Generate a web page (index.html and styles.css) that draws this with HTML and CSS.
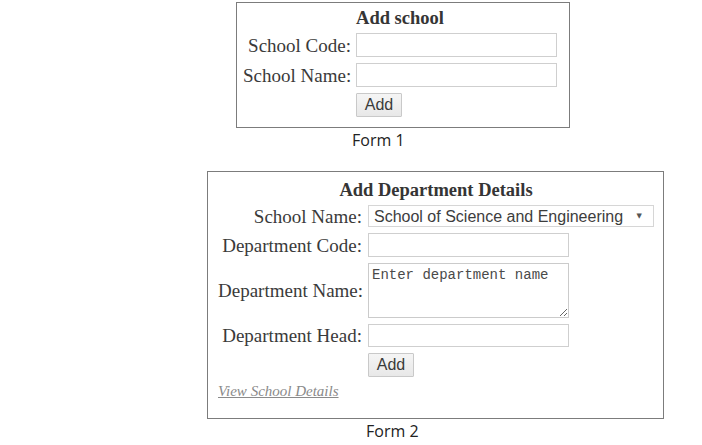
FILE: index.html
```html
<!DOCTYPE html>
<html lang="en">
<head>
<meta charset="utf-8">
<title>Forms</title>
<link rel="stylesheet" href="styles.css">
</head>
<body>
<div class="page">
  <form class="card card-school">
    <div class="title">Add school</div>
    <label class="lbl" for="sc">School Code:</label>
    <input class="field" id="sc" type="text">
    <label class="lbl" for="sn">School Name:</label>
    <input class="field" id="sn" type="text">
    <span class="spacer"></span>
    <button class="btn" type="button">Add</button>
  </form>
  <p class="caption caption-1">Form 1</p>

  <form class="card card-dept">
    <div class="title">Add Department Details</div>
    <label class="lbl" for="ds">School Name:</label>
    <div class="select-wrap">
      <select class="select" id="ds">
        <option>School of Science and Engineering</option>
      </select>
      <span class="arrow">&#9660;</span>
    </div>
    <label class="lbl" for="dc">Department Code:</label>
    <input class="field" id="dc" type="text">
    <label class="lbl" for="dn">Department Name:</label>
    <textarea class="area" id="dn" placeholder="Enter department name"></textarea>
    <label class="lbl" for="dh">Department Head:</label>
    <input class="field field-head" id="dh" type="text">
    <span class="spacer"></span>
    <button class="btn" type="button">Add</button>
    <a class="link" href="#">View School Details</a>
  </form>
  <p class="caption caption-2">Form 2</p>
</div>
</body>
</html>
```
FILE: styles.css
```css
html, body {
  margin: 0;
  background: #fff;
}
body {
  color: #353535;
  font-family: "Liberation Serif", "Times New Roman", serif;
}
.page {
  display: flex;
  flex-direction: column;
  align-items: flex-start;
}
.card {
  box-sizing: border-box;
  display: grid;
  align-items: center;
  align-content: start;
  row-gap: 6px;
  border: 1px solid #7c7c7c;
  font-size: 18.5px;
  margin: 0;
}
.card-school {
  width: 334px;
  height: 126px;
  margin: 2px 0 0 236px;
  padding: 5px 0 0 6px;
  grid-template-columns: 108px 201px;
  column-gap: 5px;
}
.card-dept {
  width: 457px;
  height: 248px;
  margin: 20px 0 0 207px;
  padding: 8px 0 0 10px;
  grid-template-columns: 144px 286px;
  column-gap: 6px;
}
.title {
  grid-column: 1 / -1;
  text-align: center;
  font-weight: bold;
  line-height: 21px;
  margin-bottom: -2px;
}
.lbl {
  text-align: right;
  white-space: nowrap;
  font-size: 19px;
  line-height: 21px;
  color: #3a3a3a;
}
.field {
  box-sizing: border-box;
  width: 201px;
  height: 24px;
  margin: 0;
  border: 1px solid #cfcfcf;
  background: #fff;
  font: 16px "Liberation Sans", Arial, sans-serif;
  padding: 0 4px;
}
.field-head {
  height: 23px;
}
.select-wrap {
  position: relative;
  width: 286px;
  height: 22px;
}
.select {
  box-sizing: border-box;
  width: 286px;
  height: 22px;
  margin: 0;
  padding: 0 0 0 5px;
  border: 1px solid #d6d6d6;
  border-radius: 0;
  background: #fff;
  color: #3d3d3d;
  font: 16px "Liberation Sans", Arial, sans-serif;
  -webkit-appearance: none;
  appearance: none;
}
.arrow {
  position: absolute;
  right: 12px;
  top: 7px;
  font: 7px "DejaVu Sans", sans-serif;
  color: #555;
  pointer-events: none;
}
.area {
  box-sizing: border-box;
  width: 201px;
  height: 55px;
  margin: 0;
  padding: 3px;
  border: 1px solid #cbcbcb;
  background: #fff;
  font: 14px/16px "Liberation Mono", "Courier New", monospace;
}
.area::placeholder {
  color: #4a4a4a;
  opacity: 1;
}
.btn {
  box-sizing: border-box;
  justify-self: start;
  width: 46px;
  height: 24px;
  margin: 0;
  padding: 0;
  border: 1px solid #c9c9c9;
  border-radius: 1px;
  background: linear-gradient(#f5f5f5, #e8e8e8);
  color: #3a3a3a;
  font: 16px "Liberation Sans", Arial, sans-serif;
}
.link {
  grid-column: 1 / -1;
  justify-self: start;
  font-size: 15px;
  line-height: 16px;
  font-style: italic;
  color: #8a8a8a;
  text-decoration: underline;
}
.caption {
  margin: 1px 0 0;
  font: 16px/22px "Open Sans", "Liberation Sans", sans-serif;
  color: #222;
}
.caption-1 {
  margin-left: 352px;
}
.caption-2 {
  margin-left: 366px;
}
```
